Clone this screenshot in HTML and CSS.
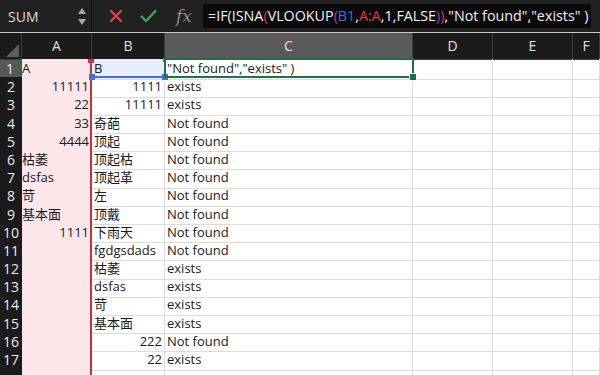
FILE: index.html
```html
<!DOCTYPE html>
<html lang="en">
<head>
    <meta charset="UTF-8">
    <title>Sheet</title>
    <link rel="stylesheet" href="styles.css">
</head>
<body>

<div class="toolbar">
    <div class="namebox">
        <span class="name">SUM</span>
        <span class="arrows"><span class="up"></span><span class="down"></span></span>
    </div>
    <div class="actions">
        <svg class="icon" width="14" height="14" viewBox="0 0 14 14"><path d="M2 2 L12 12 M12 2 L2 12" stroke="#e0434d" stroke-width="2.4" stroke-linecap="round"/></svg>
        <svg class="icon" width="17" height="14" viewBox="0 0 17 14"><path d="M1.5 7.5 L6 12 L15.5 2" stroke="#3fa852" stroke-width="2.4" fill="none" stroke-linecap="round" stroke-linejoin="round"/></svg>
        <span class="fx">fx</span>
    </div>
    <div class="formula">=IF(ISNA<span class="red">(</span>VLOOKUP<span class="purple">(</span><span class="blue">B1</span>,<span class="red">A:A</span>,1,FALSE<span class="purple">)</span><span class="red">)</span>,"Not found","exists" )</div>
</div>

<div class="sheet">
    <div class="row head">
        <div class="corner"><span class="tri"></span></div>
        <div class="ch">A</div>
        <div class="ch">B</div>
        <div class="ch selected">C</div>
        <div class="ch">D</div>
        <div class="ch">E</div>
        <div class="ch">F</div>
    </div>

    <div class="row"><div class="rh selected">1</div><div class="c a">A</div><div class="c b1">B</div><div class="c">"Not found","exists" )</div><div class="c"></div><div class="c"></div><div class="c"></div></div>
    <div class="row"><div class="rh">2</div><div class="c a num">11111</div><div class="c num">1111</div><div class="c">exists</div><div class="c"></div><div class="c"></div><div class="c"></div></div>
    <div class="row"><div class="rh">3</div><div class="c a num">22</div><div class="c num">11111</div><div class="c">exists</div><div class="c"></div><div class="c"></div><div class="c"></div></div>
    <div class="row"><div class="rh">4</div><div class="c a num">33</div><div class="c">奇葩</div><div class="c">Not found</div><div class="c"></div><div class="c"></div><div class="c"></div></div>
    <div class="row"><div class="rh">5</div><div class="c a num">4444</div><div class="c">顶起</div><div class="c">Not found</div><div class="c"></div><div class="c"></div><div class="c"></div></div>
    <div class="row"><div class="rh">6</div><div class="c a">枯萎</div><div class="c">顶起枯</div><div class="c">Not found</div><div class="c"></div><div class="c"></div><div class="c"></div></div>
    <div class="row"><div class="rh">7</div><div class="c a">dsfas</div><div class="c">顶起革</div><div class="c">Not found</div><div class="c"></div><div class="c"></div><div class="c"></div></div>
    <div class="row"><div class="rh">8</div><div class="c a">苛</div><div class="c">左</div><div class="c">Not found</div><div class="c"></div><div class="c"></div><div class="c"></div></div>
    <div class="row"><div class="rh">9</div><div class="c a">基本面</div><div class="c">顶戴</div><div class="c">Not found</div><div class="c"></div><div class="c"></div><div class="c"></div></div>
    <div class="row"><div class="rh">10</div><div class="c a num">1111</div><div class="c">下雨天</div><div class="c">Not found</div><div class="c"></div><div class="c"></div><div class="c"></div></div>
    <div class="row"><div class="rh">11</div><div class="c a"></div><div class="c">fgdgsdads</div><div class="c">Not found</div><div class="c"></div><div class="c"></div><div class="c"></div></div>
    <div class="row"><div class="rh">12</div><div class="c a"></div><div class="c">枯萎</div><div class="c">exists</div><div class="c"></div><div class="c"></div><div class="c"></div></div>
    <div class="row"><div class="rh">13</div><div class="c a"></div><div class="c">dsfas</div><div class="c">exists</div><div class="c"></div><div class="c"></div><div class="c"></div></div>
    <div class="row"><div class="rh">14</div><div class="c a"></div><div class="c">苛</div><div class="c">exists</div><div class="c"></div><div class="c"></div><div class="c"></div></div>
    <div class="row"><div class="rh">15</div><div class="c a"></div><div class="c">基本面</div><div class="c">exists</div><div class="c"></div><div class="c"></div><div class="c"></div></div>
    <div class="row"><div class="rh">16</div><div class="c a"></div><div class="c num">222</div><div class="c">Not found</div><div class="c"></div><div class="c"></div><div class="c"></div></div>
    <div class="row"><div class="rh">17</div><div class="c a"></div><div class="c num">22</div><div class="c">exists</div><div class="c"></div><div class="c"></div><div class="c"></div></div>
    <div class="row"><div class="rh"></div><div class="c a"></div><div class="c"></div><div class="c"></div><div class="c"></div><div class="c"></div><div class="c"></div></div>

    <!-- range highlights drawn over the grid -->
    <div class="range-a"><span class="handle-red"></span></div>
    <div class="range-b"><span class="hb hb-l"></span><span class="hb hb-r"></span><span class="hb-top"></span></div>
    <div class="active"><span class="fill-handle"></span></div>
</div>

</body>
</html>
```

FILE: styles.css
```css
body {
    margin: 0;
    padding: 0;
    width: 600px;
    height: 375px;
    overflow: hidden;
    background-color: #fff;
    font-family: "Open Sans", "Noto Sans CJK SC", sans-serif;
}
.toolbar {
    height: 32px;
    background-color: #212121;
    display: flex;
    align-items: center;
    border-bottom: 1px solid #c9c9c9;
}
.namebox {
    width: 92px;
    height: 32px;
    box-sizing: border-box;
    border-right: 1px solid #111;
    display: flex;
    align-items: center;
    padding-left: 8px;
}
.name {
    color: #dcdcdc;
    font-size: 14px;
    flex: 1;
}
.arrows {
    display: flex;
    flex-direction: column;
    gap: 5px;
    margin-right: 5px;
}
.up, .down {
    width: 0;
    height: 0;
    border-left: 4.5px solid transparent;
    border-right: 4.5px solid transparent;
}
.up {
    border-bottom: 6px solid #a8a8a8;
}
.down {
    border-top: 6px solid #a8a8a8;
}
.actions {
    display: flex;
    align-items: center;
    width: 112px;
    padding-left: 17px;
    box-sizing: border-box;
}
.actions .icon {
    margin-right: 17px;
}
.fx {
    font-family: "DejaVu Serif", "Liberation Serif", serif;
    font-style: italic;
    color: #8c8c8c;
    font-size: 17px;
    margin-left: 2px;
}
.formula {
    background-color: #0b0b0b;
    color: #f0f0f0;
    height: 24px;
    line-height: 24px;
    font-size: 14.3px;
    padding-left: 5px;
    width: 388px;
    box-sizing: border-box;
    white-space: nowrap;
    overflow: hidden;
    margin-left: -1px;
}
.red { color: #e8323f; }
.purple { color: #9b3fbf; }
.blue { color: #2f6fe6; }

.sheet {
    position: relative;
    font-size: 13px;
}
.row {
    display: grid;
    grid-template-columns: 22px 70px 73px 248px 80px 80px 1fr;
    height: 18.2px;
}
.row.head {
    height: 26px;
    background-color: #1b1b1b;
}
.corner {
    position: relative;
    border-right: 1px solid #3c3c3c;
    border-bottom: 1px solid #3c3c3c;
}
.tri {
    position: absolute;
    right: 2px;
    bottom: 2px;
    width: 0;
    height: 0;
    border-left: 13px solid transparent;
    border-bottom: 13px solid #5e5e5e;
}
.ch {
    color: #e2e2e2;
    font-size: 14px;
    text-align: center;
    line-height: 25px;
    border-right: 1px solid #3c3c3c;
    border-bottom: 1px solid #3c3c3c;
}
.ch.selected {
    background-color: #5a5a5a;
    border-bottom: 2px solid #1e7145;
}
.rh {
    background-color: #1b1b1b;
    color: #ececec;
    font-size: 14px;
    text-align: center;
    line-height: 20px;
    border-bottom: 1px solid #3a3a3a;
    box-sizing: border-box;
    overflow: hidden;
}
.rh.selected {
    background-color: #585858;
    border-right: 2px solid #1e7145;
}
.c {
    box-sizing: border-box;
    border-right: 1px solid #dcdcdc;
    border-bottom: 1px solid #dcdcdc;
    padding: 0 2px;
    line-height: 19.5px;
    color: #1a1a1a;
    white-space: nowrap;
    overflow-x: clip;
    overflow-y: visible;
}
.c.a {
    background-color: #fbe6e9;
    border-bottom-color: #ebd3d7;
    padding-left: 0;
}
.c.num {
    text-align: right;
}
.c.b1 {
    background-color: #e7eefa;
}

.range-a {
    position: absolute;
    left: 90px;
    top: 26px;
    bottom: 0;
    width: 2px;
    background-color: #cc2f3d;
}
.handle-red {
    position: absolute;
    left: -2px;
    top: 0;
    width: 6px;
    height: 4px;
    background-color: #d9303f;
}
.range-b {
    position: absolute;
    left: 92px;
    top: 43px;
    width: 73px;
    height: 2px;
    background-color: #3b73d6;
}
.hb {
    position: absolute;
    top: -2px;
    width: 6px;
    height: 6px;
    background-color: #3b73d6;
}
.hb-l { left: -3px; }
.hb-r { right: -3px; }
.hb-top {
    position: absolute;
    right: -1px;
    top: -18px;
    width: 3px;
    height: 4px;
    background-color: #3b73d6;
}
.active {
    position: absolute;
    left: 164px;
    top: 25px;
    width: 250px;
    height: 20px;
    box-sizing: border-box;
    border: 2px solid #1e7145;
}
.fill-handle {
    position: absolute;
    right: -5px;
    bottom: -5px;
    width: 6px;
    height: 6px;
    background-color: #1e7145;
    border: 1px solid #fff;
}
```
